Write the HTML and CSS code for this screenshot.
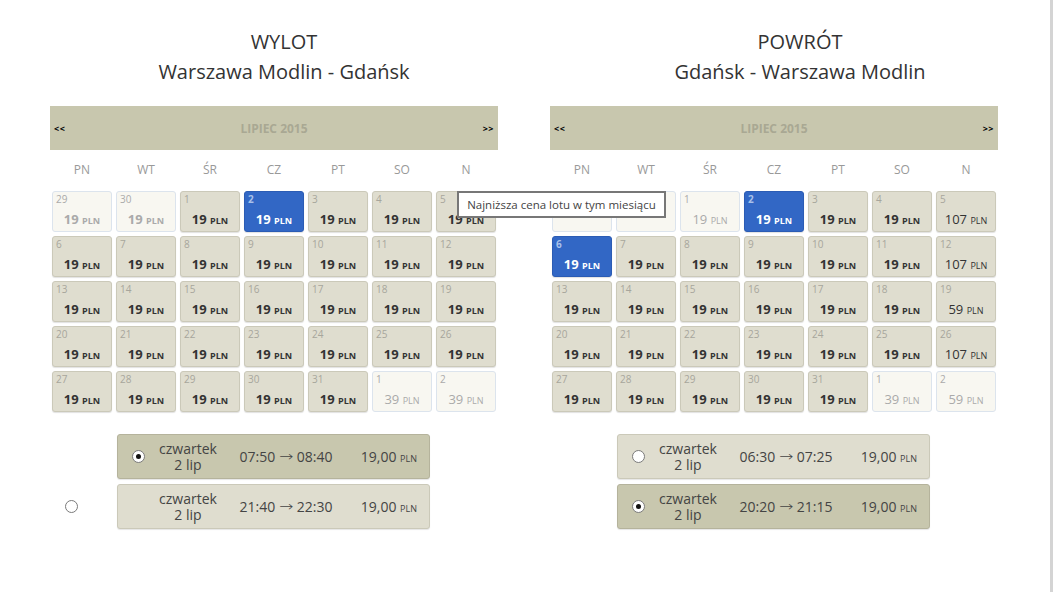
FILE: index.html
```html
<!DOCTYPE html><html lang="pl"><head><meta charset="utf-8">
<meta name="viewport" content="width=device-width,initial-scale=1">
<title>Wybór lotu</title>
<link rel="stylesheet" href="styles.css">
</head>

<body>
<div class="page">

  <!-- ------------- outbound ------------- -->
  <section class="leg">
    <div class="head head--out">
      <div>WYLOT</div>
      <div>Warszawa Modlin - Gdańsk</div>
    </div>

    <div class="cal">
      <div class="bar"><span class="nav">&lt;&lt;</span><span class="month">LIPIEC 2015</span><span class="nav">&gt;&gt;</span></div>
      <div class="days"><span>PN</span><span>WT</span><span>ŚR</span><span>CZ</span><span>PT</span><span>SO</span><span>N</span></div>
      <div class="grid">
        <div class="cell off low"><i>29</i><b>19 <small>PLN</small></b></div>
        <div class="cell off low"><i>30</i><b>19 <small>PLN</small></b></div>
        <div class="cell low"><i>1</i><b>19 <small>PLN</small></b></div>
        <div class="cell sel low"><i>2</i><b>19 <small>PLN</small></b></div>
        <div class="cell low"><i>3</i><b>19 <small>PLN</small></b></div>
        <div class="cell low"><i>4</i><b>19 <small>PLN</small></b></div>
        <div class="cell low"><i>5</i><b>19 <small>PLN</small></b></div>

        <div class="cell low"><i>6</i><b>19 <small>PLN</small></b></div>
        <div class="cell low"><i>7</i><b>19 <small>PLN</small></b></div>
        <div class="cell low"><i>8</i><b>19 <small>PLN</small></b></div>
        <div class="cell low"><i>9</i><b>19 <small>PLN</small></b></div>
        <div class="cell low"><i>10</i><b>19 <small>PLN</small></b></div>
        <div class="cell low"><i>11</i><b>19 <small>PLN</small></b></div>
        <div class="cell low"><i>12</i><b>19 <small>PLN</small></b></div>

        <div class="cell low"><i>13</i><b>19 <small>PLN</small></b></div>
        <div class="cell low"><i>14</i><b>19 <small>PLN</small></b></div>
        <div class="cell low"><i>15</i><b>19 <small>PLN</small></b></div>
        <div class="cell low"><i>16</i><b>19 <small>PLN</small></b></div>
        <div class="cell low"><i>17</i><b>19 <small>PLN</small></b></div>
        <div class="cell low"><i>18</i><b>19 <small>PLN</small></b></div>
        <div class="cell low"><i>19</i><b>19 <small>PLN</small></b></div>

        <div class="cell low"><i>20</i><b>19 <small>PLN</small></b></div>
        <div class="cell low"><i>21</i><b>19 <small>PLN</small></b></div>
        <div class="cell low"><i>22</i><b>19 <small>PLN</small></b></div>
        <div class="cell low"><i>23</i><b>19 <small>PLN</small></b></div>
        <div class="cell low"><i>24</i><b>19 <small>PLN</small></b></div>
        <div class="cell low"><i>25</i><b>19 <small>PLN</small></b></div>
        <div class="cell low"><i>26</i><b>19 <small>PLN</small></b></div>

        <div class="cell low"><i>27</i><b>19 <small>PLN</small></b></div>
        <div class="cell low"><i>28</i><b>19 <small>PLN</small></b></div>
        <div class="cell low"><i>29</i><b>19 <small>PLN</small></b></div>
        <div class="cell low"><i>30</i><b>19 <small>PLN</small></b></div>
        <div class="cell low"><i>31</i><b>19 <small>PLN</small></b></div>
        <div class="cell off"><i>1</i><b>39 <small>PLN</small></b></div>
        <div class="cell off"><i>2</i><b>39 <small>PLN</small></b></div>
      </div>
    </div>

    <div class="flights">
      <div class="opt">
        <span class="slot"></span>
        <div class="fl fl--on">
          <span class="slot"><span class="radio on"></span></span>
          <span class="date">czwartek<br>2 lip</span>
          <span class="time">07:50 <span class="arr">→</span> 08:40</span>
          <span class="price">19,00 <small>PLN</small></span>
        </div>
      </div>
      <div class="opt">
        <span class="slot"><span class="radio"></span></span>
        <div class="fl">
          <span class="slot"></span>
          <span class="date">czwartek<br>2 lip</span>
          <span class="time">21:40 <span class="arr">→</span> 22:30</span>
          <span class="price">19,00 <small>PLN</small></span>
        </div>
      </div>
    </div>
  </section>

  <!-- ------------- return ------------- -->
  <section class="leg">
    <div class="head head--ret">
      <div>POWRÓT</div>
      <div>Gdańsk - Warszawa Modlin</div>
    </div>

    <div class="cal">
      <div class="bar"><span class="nav">&lt;&lt;</span><span class="month">LIPIEC 2015</span><span class="nav">&gt;&gt;</span></div>
      <div class="days"><span>PN</span><span>WT</span><span>ŚR</span><span>CZ</span><span>PT</span><span>SO</span><span>N</span></div>
      <div class="grid">
        <div class="cell off"><i>29</i></div>
        <div class="cell off"><i>30</i></div>
        <div class="cell off"><i>1</i><b>19 <small>PLN</small></b></div>
        <div class="cell sel low"><i>2</i><b>19 <small>PLN</small></b></div>
        <div class="cell low"><i>3</i><b>19 <small>PLN</small></b></div>
        <div class="cell low"><i>4</i><b>19 <small>PLN</small></b></div>
        <div class="cell"><i>5</i><b>107 <small>PLN</small></b></div>

        <div class="cell sel low"><i>6</i><b>19 <small>PLN</small></b></div>
        <div class="cell low"><i>7</i><b>19 <small>PLN</small></b></div>
        <div class="cell low"><i>8</i><b>19 <small>PLN</small></b></div>
        <div class="cell low"><i>9</i><b>19 <small>PLN</small></b></div>
        <div class="cell low"><i>10</i><b>19 <small>PLN</small></b></div>
        <div class="cell low"><i>11</i><b>19 <small>PLN</small></b></div>
        <div class="cell"><i>12</i><b>107 <small>PLN</small></b></div>

        <div class="cell low"><i>13</i><b>19 <small>PLN</small></b></div>
        <div class="cell low"><i>14</i><b>19 <small>PLN</small></b></div>
        <div class="cell low"><i>15</i><b>19 <small>PLN</small></b></div>
        <div class="cell low"><i>16</i><b>19 <small>PLN</small></b></div>
        <div class="cell low"><i>17</i><b>19 <small>PLN</small></b></div>
        <div class="cell low"><i>18</i><b>19 <small>PLN</small></b></div>
        <div class="cell"><i>19</i><b>59 <small>PLN</small></b></div>

        <div class="cell low"><i>20</i><b>19 <small>PLN</small></b></div>
        <div class="cell low"><i>21</i><b>19 <small>PLN</small></b></div>
        <div class="cell low"><i>22</i><b>19 <small>PLN</small></b></div>
        <div class="cell low"><i>23</i><b>19 <small>PLN</small></b></div>
        <div class="cell low"><i>24</i><b>19 <small>PLN</small></b></div>
        <div class="cell low"><i>25</i><b>19 <small>PLN</small></b></div>
        <div class="cell"><i>26</i><b>107 <small>PLN</small></b></div>

        <div class="cell low"><i>27</i><b>19 <small>PLN</small></b></div>
        <div class="cell low"><i>28</i><b>19 <small>PLN</small></b></div>
        <div class="cell low"><i>29</i><b>19 <small>PLN</small></b></div>
        <div class="cell low"><i>30</i><b>19 <small>PLN</small></b></div>
        <div class="cell low"><i>31</i><b>19 <small>PLN</small></b></div>
        <div class="cell off"><i>1</i><b>39 <small>PLN</small></b></div>
        <div class="cell off"><i>2</i><b>59 <small>PLN</small></b></div>
      </div>
    </div>

    <div class="flights">
      <div class="opt">
        <span class="slot"></span>
        <div class="fl">
          <span class="slot"><span class="radio"></span></span>
          <span class="date">czwartek<br>2 lip</span>
          <span class="time">06:30 <span class="arr">→</span> 07:25</span>
          <span class="price">19,00 <small>PLN</small></span>
        </div>
      </div>
      <div class="opt">
        <span class="slot"></span>
        <div class="fl fl--on">
          <span class="slot"><span class="radio on"></span></span>
          <span class="date">czwartek<br>2 lip</span>
          <span class="time">20:20 <span class="arr">→</span> 21:15</span>
          <span class="price">19,00 <small>PLN</small></span>
        </div>
      </div>
    </div>
  </section>

  <!-- hover hint over the month bar prices -->
  <div class="tip">Najniższa cena lotu w tym miesiącu</div>
</div>
</body></html>
```

FILE: styles.css
```css
/* ---------- flight picker, two calendars side by side ---------- */
:root{
  --bar: #c8c7ae;
  --cell: #dfddcf;
  --cell-line: #cbc9b9;
  --off: #f8f7f1;
  --off-line: #dce4ed;
  --blue: #3267c5;
  --text: #333;
}
*{box-sizing:border-box}
body{margin:0;font-family:"Open Sans",Arial,sans-serif;color:var(--text);background:#fff}

.page{
  position:relative;width:1053px;height:592px;overflow:hidden;
  padding:27px 0 0 50px;display:flex;gap:52px;
  border-right:3px solid #d4d4d4;
}
.leg{width:448px}

/* titles */
.head{text-align:center;font-size:20px;line-height:30px;color:#333;margin-bottom:19px}
.head--out{padding-left:20px}
.head--ret{padding-left:52px}

/* month bar */
.bar{
  height:44px;background:var(--bar);display:flex;align-items:center;justify-content:space-between;
  padding:0 4px;
}
.nav{font-size:9px;font-weight:700;color:#000;letter-spacing:.5px;width:20px}
.nav:last-child{text-align:right}
.month{font-size:12px;font-weight:700;color:#a9a893}

.days{display:grid;grid-template-columns:repeat(7,64px);height:39px;align-items:center}
.days span{text-align:center;font-size:12px;color:#999}

/* day cells */
.grid{display:grid;grid-template-columns:repeat(7,64px);grid-auto-rows:45px}
.cell{
  margin:2px;height:41px;border:1px solid var(--cell-line);border-radius:3px;background:var(--cell);
  padding:1px 3px;display:flex;flex-direction:column;
  box-shadow:0 1px 1px rgba(0,0,0,.12);
}
.cell i{font-style:normal;font-size:10px;line-height:12px;color:#a7a69c}
.cell b{
  margin-top:6px;text-align:center;font-size:13px;line-height:16px;font-weight:400;color:#333;
}
.cell b small{font-size:9px}
.cell.low b{font-weight:700}
.cell.off{background:var(--off);border-color:var(--off-line);box-shadow:none}
.cell.off i,.cell.off b{color:#aaa}
.cell.sel{background:var(--blue);border-color:#2b5cb4}
.cell.sel i{color:#a9c1ea;font-weight:700}
.cell.sel b{color:#fff}

/* flight rows */
.flights{margin-top:20px;display:flex;flex-direction:column;gap:5px}
.opt{display:flex;align-items:center}
.opt > .slot{width:67px;height:45px;display:flex;align-items:center;padding-left:15px}
.fl{
  width:313px;height:45px;display:flex;align-items:center;
  background:var(--cell);border:1px solid var(--cell-line);border-radius:3px;
  box-shadow:0 1px 1px rgba(0,0,0,.1);font-size:14px;color:#444;
}
.fl--on{background:var(--bar);border-color:#b5b39c}
.fl .slot{width:40px;display:flex;padding-left:14px}
.date{width:60px;display:flex;justify-content:center;text-align:center;line-height:16px;white-space:nowrap;padding-top:1px}
.time{width:136px;text-align:center;white-space:nowrap}
.arr{font-family:"DejaVu Sans",sans-serif;font-size:17px;font-weight:300;line-height:14px;display:inline-block;transform:scaleY(.8)}
.price{flex:1;text-align:right;padding-right:12px;white-space:nowrap}
.price small{font-size:9px}

.radio{
  width:13px;height:13px;border-radius:50%;border:1px solid #7a7a7a;background:#fff;
  display:flex;align-items:center;justify-content:center;
}
.radio.on::after{content:"";width:5px;height:5px;border-radius:50%;background:#111}

/* tooltip */
.tip{
  position:absolute;left:457px;top:191px;width:209px;height:27px;
  border:2px solid #777;background:#fff;font-size:11.5px;color:#444;
  display:flex;align-items:center;justify-content:center;white-space:nowrap;
}
```
